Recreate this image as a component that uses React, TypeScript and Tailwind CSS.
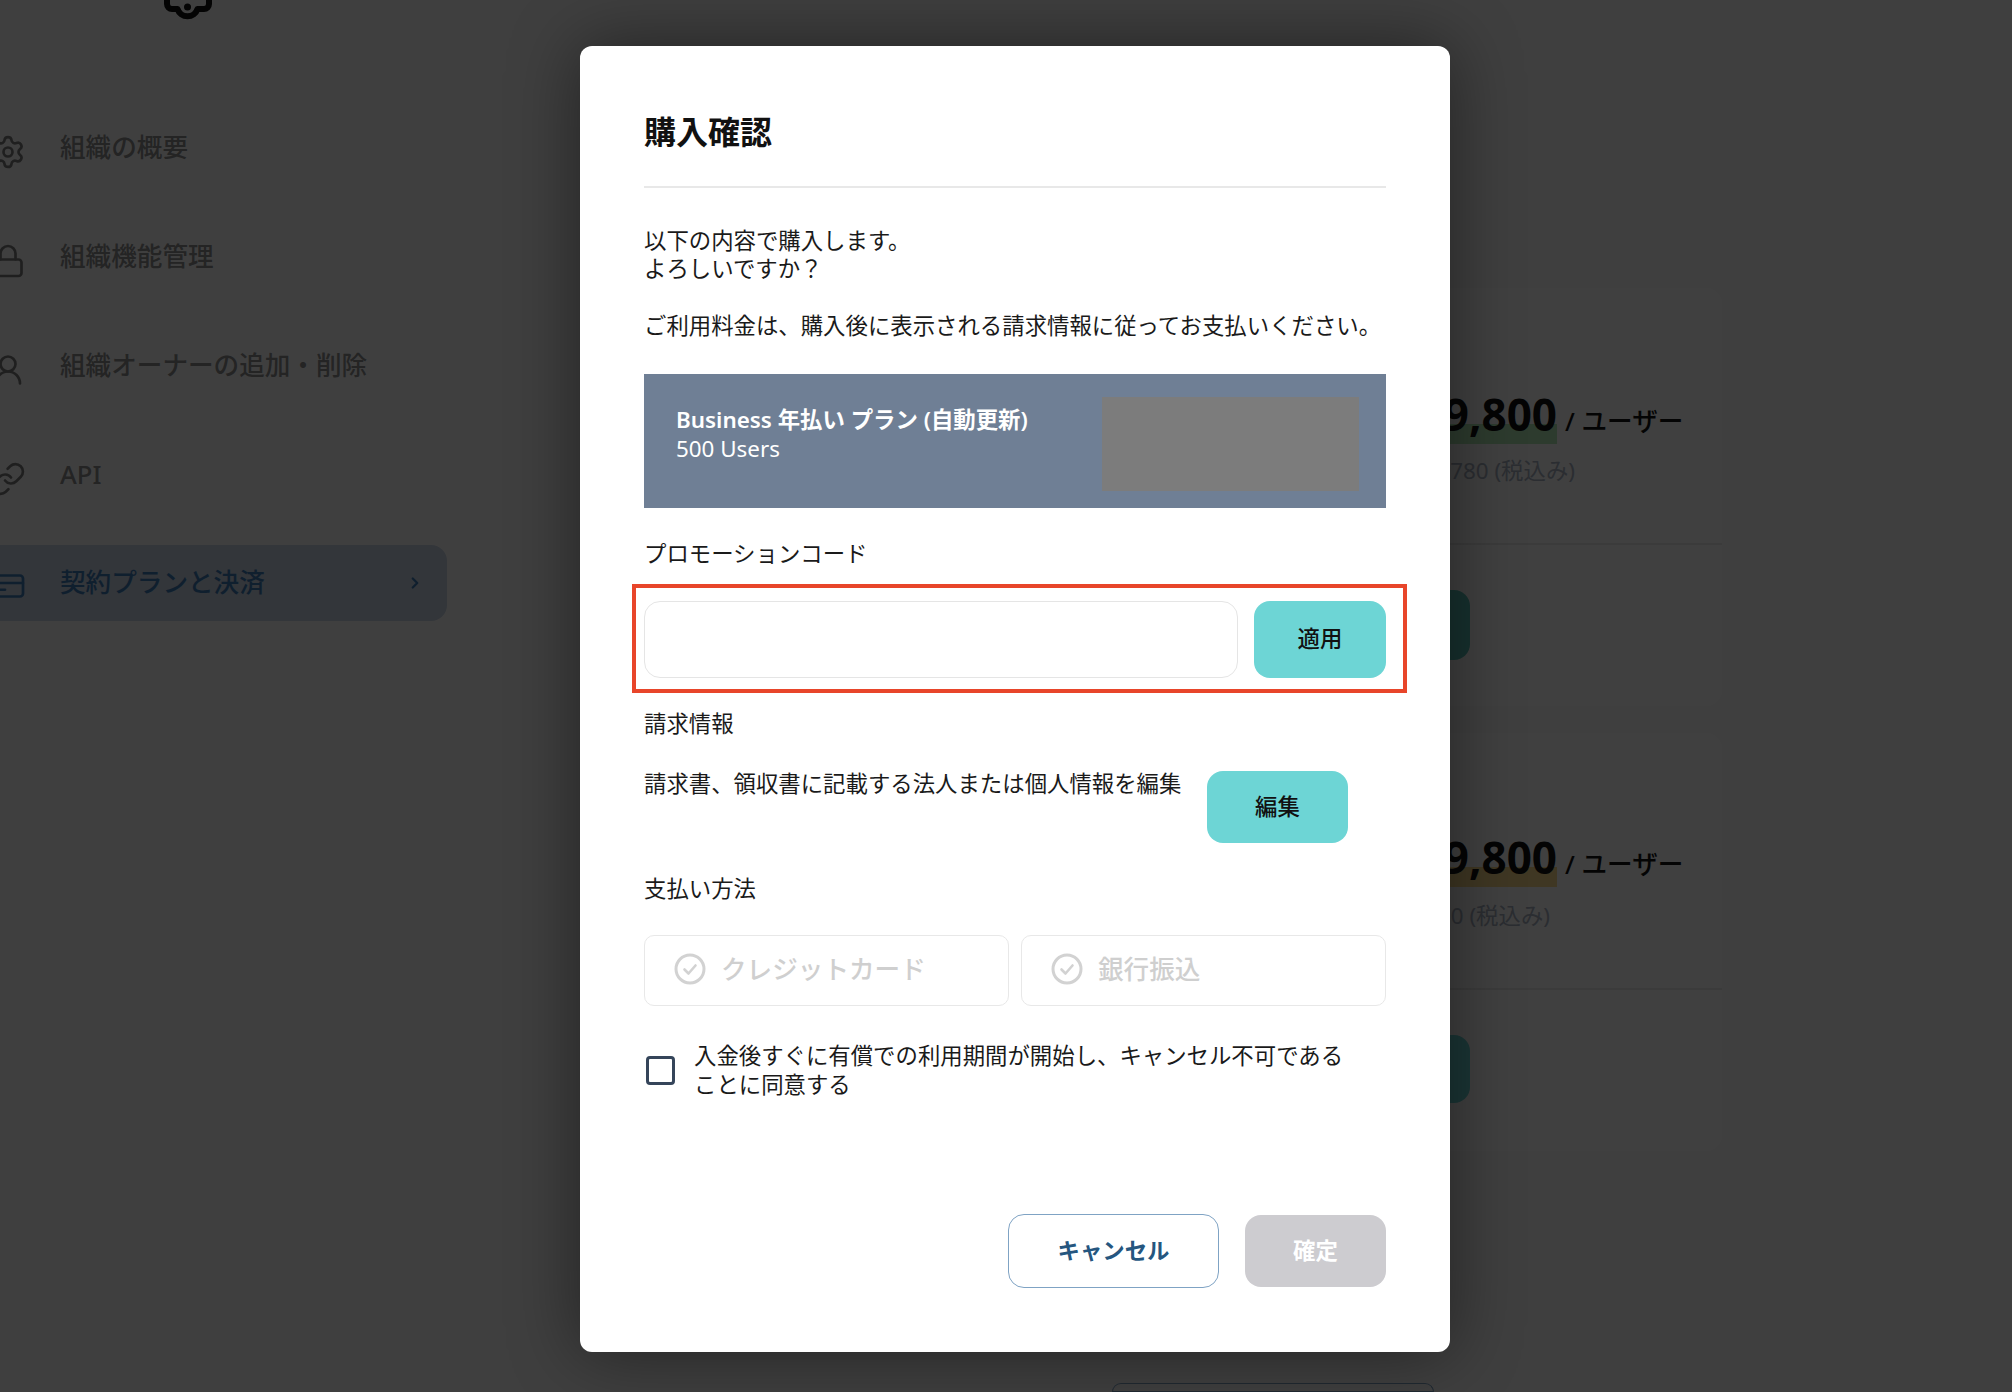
import { Settings, Lock, UserRound, Link, ChevronRight } from "lucide-react";

const navItems = [
  { label: "組織の概要", icon: Settings },
  { label: "組織機能管理", icon: Lock },
  { label: "組織オーナーの追加・削除", icon: UserRound },
  { label: "API", icon: Link },
];

function PlanCard({ top, sub, subClass, bar, btn }: { top: string; sub: string; subClass: string; bar: string; btn: string }) {
  return (
    <div className="w-[722px] rounded-2xl bg-[#ffffff]">
      <div className="h-[257px] border-b-2 border-[#e9e9e9] flex flex-col justify-end pb-[56px]">
        <div className="flex items-baseline">
          <span className="w-[557px] relative text-right text-[44px] leading-[60px] font-bold text-[#111]">
            <span className={`absolute right-0 bottom-0 w-[240px] h-[20px] ${bar}`} />
            <span className="relative">{top}</span>
          </span>
          <span className="ml-2 text-[25.6px] font-medium text-[#111]">/ ユーザー</span>
        </div>
        <div className={`${subClass} text-right text-[22.4px] leading-[32px] text-[#aab4c4]`}>{sub}</div>
      </div>
      <div className="h-[161px] pt-[45px] flex">
        <div className={`ml-[100px] w-[370px] rounded-2xl ${btn}`} />
      </div>
    </div>
  );
}

function CheckCircle() {
  return (
    <svg width="32" height="32" viewBox="0 0 32 32" fill="none" className="shrink-0 ml-[1px] -mr-[1px] -translate-y-[2px]">
      <circle cx="16" cy="16" r="14" stroke="#d2d2d2" strokeWidth="3" />
      <path d="M10.5 16.5l4 4 7-8" stroke="#d2d2d2" strokeWidth="2.6" strokeLinecap="round" strokeLinejoin="round" />
    </svg>
  );
}

function CardIcon() {
  return (
    <svg width="36" height="36" viewBox="0 0 24 24" fill="none" stroke="currentColor" strokeWidth="1.8" strokeLinecap="round" className="-ml-[10px] mr-[34px] translate-y-[3px]">
      <rect x="2" y="5" width="20" height="14" rx="2" />
      <path d="M2 10h20" />
      <path d="M5 14.5h5" />
    </svg>
  );
}

export default function App() {
  return (
    <div className="relative h-[1392px] w-[2012px] overflow-hidden bg-[#fcfcfc] font-['Noto_Sans','Noto_Sans_CJK_JP',sans-serif]">
      {/* page under the dialog */}
      <div className="flex h-full">
        <aside className="w-[1000px] shrink-0">
          <div className="h-[20px] flex justify-center w-[375px]">
            <svg width="48" height="20" viewBox="0 0 48 20" fill="none" className="text-[#111] overflow-visible">
              <path d="M3 -6V4a5 5 0 0 0 5 5h5.5a10.5 10.5 0 0 0 20 0H40a5 5 0 0 0 5-5V-6" stroke="currentColor" strokeWidth="6" strokeLinejoin="round" />
              <circle cx="23.5" cy="7" r="3.5" fill="currentColor" />
            </svg>
          </div>
          <nav className="mt-[74px] flex flex-col">
            {navItems.map((item) => (
              <div key={item.label} className="h-[109px] flex items-center text-[25.6px] font-medium text-[#8e8e8e]">
                <item.icon size={36} strokeWidth={1.8} className="-ml-[10px] mr-[34px] translate-y-[3px] text-[#7e7e7e]" />
                {item.label}
              </div>
            ))}
            <div className="w-[447px] h-[76px] mt-[15px] rounded-r-2xl bg-[#c9d5e6] flex items-center text-[25.6px] font-medium text-[#3f7cb8]">
              <CardIcon />
              契約プランと決済
              <ChevronRight size={18} strokeWidth={3} className="ml-auto mr-[23px]" />
            </div>
          </nav>
        </aside>
        <main className="pt-[288px] flex flex-col gap-[27px]">
          <PlanCard top="¥9,800" sub="¥10,780 (税込み)" subClass="w-[575px] mt-[11px]" bar="bg-[#b4eab8]" btn="bg-[#5ec2bb] h-[70px]" />
          <PlanCard top="¥9,800" sub="¥10 (税込み)" subClass="w-[550px] mt-[13px]" bar="bg-[#f9d98a]" btn="bg-[#6dd5d5] h-[68px]" />
          <div className="ml-[112px] mt-[205px] w-[322px] h-[50px] rounded-t-2xl border-[1.5px] border-[#7fa3c4]" />
        </main>
      </div>

      {/* overlay */}
      <div className="absolute inset-0 bg-black/75" />

      {/* dialog */}
      <div className="absolute left-[580px] top-[46px] w-[870px] h-[1306px] rounded-xl bg-white px-[64px] text-[22.4px] leading-[28px] text-[#1a1a1a] shadow-[0_0_70px_rgba(0,0,0,0.45)]">
        <h2 className="h-[142px] border-b-2 border-[#e8e8e8] pt-[63px] text-[32px] leading-[46px] font-bold text-[#111]">購入確認</h2>
        <p className="mt-[39px]">
          以下の内容で購入します。
          <br />
          よろしいですか？
        </p>
        <p className="mt-[29px]">ご利用料金は、購入後に表示される請求情報に従ってお支払いください。</p>
        <div className="mt-[34px] h-[134px] bg-[#6f7f95] flex justify-between pl-[32px] pr-[27px] pt-[23px] text-white">
          <div className="pt-[8px] leading-[29px]">
            <div className="font-semibold">Business 年払い プラン (自動更新)</div>
            <div>500 Users</div>
          </div>
          <div className="w-[257px] h-[94px] bg-[#7c7c7c]" />
        </div>
        <div className="mt-[32px]">プロモーションコード</div>
        <div className="relative mt-[33px] flex gap-[16px]">
          <div className="absolute -left-[12px] -right-[21px] -top-[17px] -bottom-[15px] border-4 border-[#e8452a]" />
          <input className="w-[594px] h-[77px] rounded-2xl border-[1.5px] border-[#e5e5e5]" />
          <button className="w-[132px] h-[77px] pb-[1px] rounded-2xl bg-[#6dd5d5] font-medium text-[#111]">適用</button>
        </div>
        <div className="mt-[32px]">請求情報</div>
        <div className="mt-[33px] flex items-start">
          <p className="-mt-[1px] w-[563px]">請求書、領収書に記載する法人または個人情報を編集</p>
          <button className="w-[141px] h-[72px] pb-[1px] rounded-2xl bg-[#6dd5d5] font-medium text-[#111]">編集</button>
        </div>
        <div className="mt-[32px]">支払い方法</div>
        <div className="mt-[32px] flex gap-[12px]">
          <div className="flex-1 h-[71px] rounded-[10px] border-[1.5px] border-[#e8e8e8] flex items-center pl-[28px] gap-[16px] text-[25.6px] font-medium text-[#cfcfcf]">
            <CheckCircle />
            <span className="pb-[1px]">クレジットカード</span>
          </div>
          <div className="flex-1 h-[71px] rounded-[10px] border-[1.5px] border-[#e8e8e8] flex items-center pl-[28px] gap-[16px] text-[25.6px] font-medium text-[#cfcfcf]">
            <CheckCircle />
            <span className="pb-[1px]">銀行振込</span>
          </div>
        </div>
        <label className="mt-[35px] flex items-center gap-[19px] leading-[29px]">
          <span className="ml-[2px] w-[29px] h-[29px] shrink-0 rounded-[4px] border-[3px] border-[#35455a]" />
          <span className="w-[650px]">入金後すぐに有償での利用期間が開始し、キャンセル不可であることに同意する</span>
        </label>
        <div className="mt-[115px] flex justify-end items-center gap-[26px] font-semibold">
          <button className="w-[211px] h-[74px] rounded-2xl border-[1.5px] border-[#7fa3c4] text-[#25567f]">キャンセル</button>
          <button className="w-[141px] h-[72px] rounded-2xl bg-[#cdccd0] text-white">確定</button>
        </div>
      </div>
    </div>
  );
}
